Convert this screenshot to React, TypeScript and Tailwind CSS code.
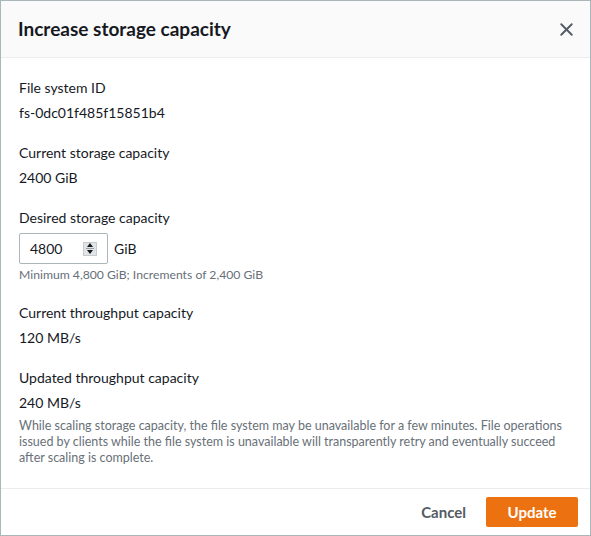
import { X } from 'lucide-react';

const Field = ({ label, value }: { label: string; value: string }) => (
  <div>
    <p className="text-[14px] leading-[20px] text-[#16191f]">{label}</p>
    <p className="mt-[5px] text-[14px] leading-[20px] text-[#16191f]">{value}</p>
  </div>
);

export default function App() {
  return (
    <div className="w-[591px] h-[536px] bg-white border border-[#aab7b8] flex flex-col font-['Lato','Open_Sans',sans-serif]">
      <div className="h-[57px] bg-[#fafafa] border-b border-[#eaeded] flex items-center justify-between pl-[17px] pr-[13px] shrink-0">
        <h2 className="text-[19px] font-bold text-[#16191f]">Increase storage capacity</h2>
        <X className="w-[21px] h-[21px] text-[#545b64]" strokeWidth={2.2} />
      </div>

      <div className="flex-1 px-[18px] pt-[20px] flex flex-col gap-[20px]">
        <Field label="File system ID" value="fs-0dc01f485f15851b4" />
        <Field label="Current storage capacity" value="2400 GiB" />
        <div>
          <p className="text-[14px] leading-[20px] text-[#16191f]">Desired storage capacity</p>
          <div className="mt-[5px] flex items-center gap-[6px]">
            <div className="w-[89px] h-[31px] border border-[#aab7b8] rounded-[2px] flex items-center justify-between pl-[10px] pr-[10px]">
              <span className="text-[14px] text-[#16191f]">4800</span>
              <div className="w-[14px] h-[14px] bg-[#e1e4e6] border border-[#c6cbcf] flex flex-col items-center justify-center gap-[1px]">
                <svg width="6" height="4" viewBox="0 0 6 4"><path d="M3 0 L6 4 L0 4 Z" fill="#16191f" /></svg>
                <div className="w-[8px] h-px bg-[#9aa0a6]" />
                <svg width="6" height="4" viewBox="0 0 6 4"><path d="M0 0 L6 0 L3 4 Z" fill="#16191f" /></svg>
              </div>
            </div>
            <span className="text-[14px] text-[#16191f]">GiB</span>
          </div>
          <p className="mt-[3px] text-[12.2px] leading-[16px] text-[#687078]">Minimum 4,800 GiB; Increments of 2,400 GiB</p>
        </div>
        <Field label="Current throughput capacity" value="120 MB/s" />
        <div>
          <Field label="Updated throughput capacity" value="240 MB/s" />
          <p className="mt-[5px] text-[12.5px] leading-[16px] text-[#687078]">
            While scaling storage capacity, the file system may be unavailable for a few minutes. File operations issued by clients while the file system is unavailable will transparently retry and eventually succeed after scaling is complete.
          </p>
        </div>
      </div>

      <div className="h-[47px] border-t border-[#eaeded] flex items-center justify-end gap-[20px] pr-[12px] shrink-0">
        <button className="text-[15px] font-bold text-[#545b64]">Cancel</button>
        <button className="w-[92px] h-[30px] bg-[#ec7211] rounded-[2px] text-[15px] font-bold text-white">Update</button>
      </div>
    </div>
  );
}
